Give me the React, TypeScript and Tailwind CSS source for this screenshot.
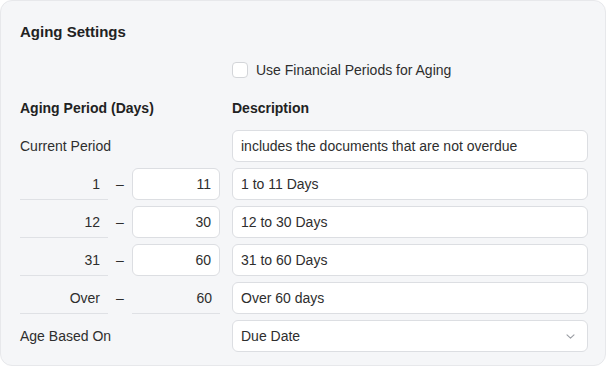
import React from 'react';

const rows = [
  { from: '1', to: '11', desc: '1 to 11 Days' },
  { from: '12', to: '30', desc: '12 to 30 Days' },
  { from: '31', to: '60', desc: '31 to 60 Days' },
];

const inputBox =
  'h-8 shrink-0 rounded-md border border-[#dcdee2] bg-white px-2 flex items-center text-[14px] text-[#2e2e2e]';

export default function App() {
  return (
    <div className="w-[608px] h-[368px] bg-white font-['Liberation_Sans',Arial,sans-serif]">
      <div className="w-[606px] h-[366px] rounded-xl border border-[#e7e8eb] bg-[#f5f6f8] pl-[19px] pr-[15px] pt-[19px] text-[14px] leading-5 text-[#2e2e2e]">
        <h2 className="text-[15px] leading-6 font-bold text-[#222]">Aging Settings</h2>

        <div className="mt-4 flex h-5 items-center pl-[212px]">
          <span className="h-4 w-4 rounded-[4px] border border-[#d3d5d9] bg-white" />
          <span className="ml-2">Use Financial Periods for Aging</span>
        </div>

        <div className="mt-[18px] flex font-bold text-[#222]">
          <div className="w-[212px]">Aging Period (Days)</div>
          <div>Description</div>
        </div>

        <div className="mt-3 flex flex-col gap-[6px]">
          <div className="flex items-center">
            <div className="w-[212px] shrink-0">Current Period</div>
            <div className={`${inputBox} w-[356px]`}>includes the documents that are not overdue</div>
          </div>

          {rows.map((r) => (
            <div key={r.from} className="flex items-center">
              <div className="flex h-8 w-[88px] shrink-0 items-center justify-end border-b border-[#dfe1e5] pr-2">{r.from}</div>
              <div className="w-6 shrink-0 text-center">–</div>
              <div className={`${inputBox} w-[88px] justify-end`}>{r.to}</div>
              <div className="w-3 shrink-0" />
              <div className={`${inputBox} w-[356px]`}>{r.desc}</div>
            </div>
          ))}

          <div className="flex items-center">
            <div className="flex h-8 w-[88px] shrink-0 items-center justify-end border-b border-[#dfe1e5] pr-2">Over</div>
            <div className="w-6 shrink-0 text-center">–</div>
            <div className="flex h-8 w-[88px] shrink-0 items-center justify-end border-b border-[#dfe1e5] pr-2">60</div>
            <div className="w-3 shrink-0" />
            <div className={`${inputBox} w-[356px]`}>Over 60 days</div>
          </div>

          <div className="flex items-center">
            <div className="w-[212px] shrink-0">Age Based On</div>
            <div className={`${inputBox} w-[356px] justify-between pr-3`}>
              <span>Due Date</span>
              <svg width="9" height="5" viewBox="0 0 9 5" fill="none">
                <path d="M1 0.8l3.5 3.4 3.5-3.4" stroke="#9a9da3" strokeWidth="1.1" strokeLinecap="round" strokeLinejoin="round" />
              </svg>
            </div>
          </div>
        </div>
      </div>
    </div>
  );
}
